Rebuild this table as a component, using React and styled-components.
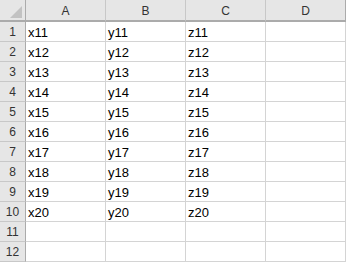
import React from 'react';
import styled, { createGlobalStyle } from 'styled-components';

const Global = createGlobalStyle`
  html, body { margin: 0; padding: 0; background: #ffffff; }
  body { font-family: 'Liberation Sans', Arial, sans-serif; }
`;

const Sheet = styled.div`
  display: grid;
  grid-template-columns: 26px repeat(4, 80px);
  grid-auto-rows: 20px;
  grid-template-rows: 22px;
  width: 346px;
`;

const Corner = styled.div`
  position: relative;
  background: #e6e6e6;
  border-right: 1px solid #ababab;
  border-bottom: 2px solid #ababab;
  box-sizing: border-box;
`;

const CornerTriangle = styled.div`
  position: absolute;
  right: 3px;
  bottom: 2px;
  width: 0;
  height: 0;
  border-left: 12px solid transparent;
  border-bottom: 12px solid #c2c2c2;
`;

const ColHead = styled.div`
  display: flex;
  align-items: center;
  justify-content: center;
  background: #e6e6e6;
  border-right: 1px solid ${p => (p.last ? '#ababab' : '#c8c8c8')};
  border-bottom: 2px solid #ababab;
  box-sizing: border-box;
  color: #333333;
  font-size: 12px;
  padding-top: 1px;
`;

const RowHead = styled.div`
  display: flex;
  align-items: center;
  justify-content: center;
  background: #e6e6e6;
  border-right: 1px solid #ababab;
  border-bottom: 1px solid #c8c8c8;
  box-sizing: border-box;
  color: #333333;
  font-size: 12px;
  padding-top: 1px;
`;

const Cell = styled.div`
  display: flex;
  align-items: center;
  padding: 1px 0 0 2px;
  border-right: 1px solid #d4d4d4;
  border-bottom: 1px solid #d4d4d4;
  box-sizing: border-box;
  color: #000000;
  font-size: 13px;
`;

const cols = ['A', 'B', 'C', 'D'];
const rows = Array.from({ length: 12 }, (_, i) => i + 1);

export default function App() {
  return (
    <>
      <Global />
      <Sheet>
        <Corner><CornerTriangle /></Corner>
        {cols.map((c, i) => (
          <ColHead key={c} last={i === cols.length - 1}>{c}</ColHead>
        ))}
        {rows.map(r => (
          <React.Fragment key={r}>
            <RowHead>{r}</RowHead>
            <Cell>{r <= 10 ? 'x' + (r + 10) : ''}</Cell>
            <Cell>{r <= 10 ? 'y' + (r + 10) : ''}</Cell>
            <Cell>{r <= 10 ? 'z' + (r + 10) : ''}</Cell>
            <Cell />
          </React.Fragment>
        ))}
      </Sheet>
    </>
  );
}
